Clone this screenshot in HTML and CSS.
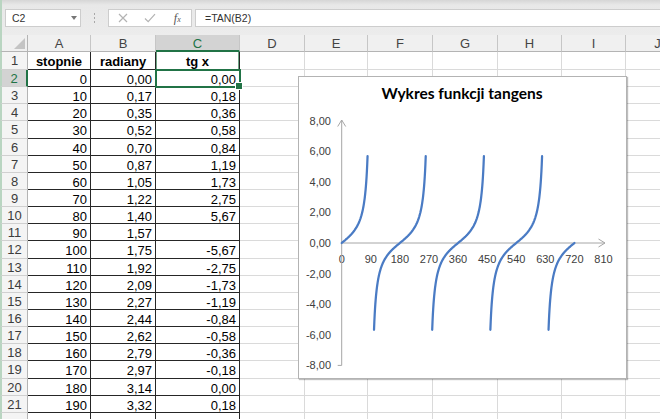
FILE: index.html
```html
<!DOCTYPE html>
<html lang="pl">
<head>
    <meta charset="UTF-8">
    <meta name="viewport" content="width=device-width, initial-scale=1.0">
    <title>Wykres funkcji tangens</title>
    <link rel="stylesheet" href="styles.css">
</head>
<body>
    <div class="window">
        <div class="formula-bar">
            <div class="name-box">
                <span>C2</span>
                <span class="drop"></span>
            </div>
            <div class="grip"><span></span><span></span><span></span></div>
            <div class="fx-box">
                <span class="btn">
                    <svg width="10" height="10" viewBox="0 0 10 10"><path d="M1 1L9 9M9 1L1 9" stroke="#b3b3b3" stroke-width="1.2" fill="none"/></svg>
                </span>
                <span class="btn">
                    <svg width="12" height="10" viewBox="0 0 12 10"><path d="M1 5.5L4.2 8.7L11 1.2" stroke="#b3b3b3" stroke-width="1.2" fill="none"/></svg>
                </span>
                <span class="btn fx"><i>f</i><small>x</small></span>
            </div>
            <div class="formula">=TAN(B2)</div>
        </div>

        <div class="sheet" id="sheet"></div>

        <div class="chart">
            <svg id="plot" width="327" height="301" viewBox="0 0 327 301">
                <text class="title" x="163" y="22" text-anchor="middle">Wykres funkcji tangens</text>
                <g id="labels"></g>
                <path class="axis" d="M42.7 43V288.4M38.7 288.4H42.7M38.7 49.5L42.7 43L46.7 49.5"/>
                <path class="axis" d="M42.7 166H306M299.5 162L306 166L299.5 170"/>
                <path id="curve" class="curve" d=""/>
            </svg>
        </div>
    </div>

    <script>
        const sheet = document.getElementById("sheet");
        const cols = ["A", "B", "C", "D", "E", "F", "G", "H", "I", "J"];

        function cell(cls, text) {
            const d = document.createElement("div");
            d.className = cls;
            if (text !== undefined) d.textContent = text;
            sheet.appendChild(d);
        }

        function fmt(v) {
            if (Math.abs(v) < 0.005) v = 0;
            return v.toFixed(2).replace(".", ",");
        }

        cell("corner");
        cols.forEach(c => cell(c === "C" ? "col-head active" : "col-head", c));

        for (let r = 1; r <= 22; r++) {
            // row 22 is only a sliver at the bottom edge, no label visible
            cell(r === 2 ? "row-head active" : "row-head", r <= 21 ? r : undefined);
            if (r === 1) {
                cell("c data head", "stopnie");
                cell("c data head", "radiany");
                cell("c data head c1", "tg x");
            } else if (r <= 21) {
                const deg = (r - 2) * 10;
                const rad = deg * Math.PI / 180;
                cell("c data num", deg);
                cell("c data num", fmt(rad));
                cell(r === 2 ? "c data num current" : "c data num", deg === 90 ? "" : fmt(Math.tan(rad)));
            } else {
                cell("c data");
                cell("c data");
                cell("c data");
            }
            for (let i = 3; i < cols.length; i++) cell("c");
        }

        // chart
        const svgNS = "http://www.w3.org/2000/svg";
        const x0 = 42.7, y0 = 166, kx = 0.3232, ky = 15.3;
        const labels = document.getElementById("labels");

        function label(x, y, text, anchor) {
            const t = document.createElementNS(svgNS, "text");
            t.setAttribute("x", x);
            t.setAttribute("y", y);
            t.setAttribute("text-anchor", anchor);
            t.textContent = text;
            labels.appendChild(t);
        }

        for (let v = 8; v >= -8; v -= 2) {
            label(32, y0 - v * ky + 4, fmt(v), "end");
        }
        for (let deg = 0; deg <= 810; deg += 90) {
            label(x0 + deg * kx, 186, deg, "middle");
        }

        const segments = [[0, 80], [100, 260], [280, 440], [460, 620], [640, 720]];
        let d = "";
        segments.forEach(([a, b]) => {
            for (let deg = a; deg <= b; deg++) {
                const x = x0 + deg * kx;
                const y = y0 - Math.tan(deg * Math.PI / 180) * ky;
                d += (deg === a ? "M" : "L") + x.toFixed(2) + " " + y.toFixed(2) + " ";
            }
        });
        document.getElementById("curve").setAttribute("d", d);
    </script>
</body>
</html>
```

FILE: styles.css
```css
* {
    box-sizing: border-box;
}

body {
    margin: 0;
    font-family: "Liberation Sans", Arial, sans-serif;
    background: #fff;
    overflow: hidden;
}

.window {
    position: relative;
    width: 660px;
    height: 419px;
    overflow: hidden;
}

/* formula bar */
.formula-bar {
    height: 35px;
    display: flex;
    align-items: flex-start;
    padding-top: 9px;
    background: linear-gradient(#d6d6d6, #e8e8e8 5px, #ececec);
    border-left: 2px solid #b9d5c1;
    font-size: 10.5px;
    color: #333;
}

.name-box {
    margin-left: 3px;
    width: 76px;
    height: 18px;
    display: flex;
    align-items: center;
    justify-content: space-between;
    padding: 0 3px 0 6px;
    background: #fff;
    border: 1px solid #cdcdcd;
}

.drop {
    width: 0;
    height: 0;
    border-left: 3.5px solid transparent;
    border-right: 3.5px solid transparent;
    border-top: 4px solid #777;
}

.grip {
    width: 27px;
    height: 18px;
    display: flex;
    flex-direction: column;
    align-items: center;
    justify-content: center;
    gap: 2px;
}

.grip span {
    width: 1px;
    height: 2px;
    background: #a8a8a8;
}

.fx-box {
    width: 84px;
    height: 18px;
    display: flex;
    background: #fff;
    border: 1px solid #cdcdcd;
}

.btn {
    width: 28px;
    height: 16px;
    display: flex;
    align-items: center;
    justify-content: center;
}

.fx {
    font-family: "Liberation Serif", serif;
    font-size: 12px;
    color: #555;
}

.fx small {
    font-size: 8px;
    font-style: italic;
    margin-top: 3px;
}

.formula {
    flex: 1;
    margin-left: 3px;
    height: 18px;
    line-height: 16px;
    padding-left: 9px;
    background: #fff;
    border: 1px solid #cdcdcd;
    border-right: none;
}

/* sheet */
.sheet {
    display: grid;
    grid-template-columns: 28px 63px 65px 84px 65px 63px 65px 65px 64px 64px 64px;
    grid-template-rows: 17px 18px repeat(21, 17.15px);
    font-size: 13px;
    color: #000;
}

.corner {
    position: relative;
    background: #f0f0f0;
    border-left: 2px solid #b9d5c1;
    border-right: 1px solid #b4b4b4;
    border-bottom: 1px solid #b4b4b4;
}

.corner::after {
    content: "";
    position: absolute;
    right: 2px;
    bottom: 2px;
    width: 0;
    height: 0;
    border-left: 11px solid transparent;
    border-bottom: 11px solid #c4c4c4;
}

.col-head {
    background: #f0f0f0;
    border-right: 1px solid #c6c6c6;
    border-bottom: 1px solid #b4b4b4;
    text-align: center;
    line-height: 14px;
    padding-top: 2px;
    color: #444;
}

.col-head.active {
    background: #d3d3d3;
    color: #217346;
    border-bottom: 2px solid #217346;
}

.row-head {
    background: #f4f4f4;
    border-left: 2px solid #b9d5c1;
    border-right: 1px solid #b4b4b4;
    border-bottom: 1px solid #d0d0d0;
    text-align: center;
    line-height: 14px;
    padding-top: 2px;
    color: #3c3c3c;
}

.row-head.active {
    background: #d3d3d3;
    color: #217346;
    border-right: 2px solid #217346;
}

.c {
    border-right: 1px solid #dadada;
    border-bottom: 1px solid #dadada;
    padding: 3px 3px 0;
    line-height: 14px;
    white-space: nowrap;
    overflow: hidden;
}

.data {
    border-color: #262626;
}

.num {
    text-align: right;
}

.head {
    text-align: center;
    font-weight: bold;
}

.c1 {
    box-shadow: inset 1px 0 #6fa585, inset -1px 0 #6fa585;
}

.current {
    position: relative;
    overflow: visible;
    outline: 2px solid #217346;
    outline-offset: -1px;
    z-index: 1;
}

.current::after {
    content: "";
    position: absolute;
    right: -4px;
    bottom: -4px;
    width: 6px;
    height: 6px;
    background: #217346;
    border: 1px solid #fff;
}

/* chart */
.chart {
    position: absolute;
    left: 298px;
    top: 76px;
    width: 329px;
    height: 303px;
    background: #fff;
    border: 1px solid #b3b3b3;
    box-shadow: 1px 1px 1px rgba(0, 0, 0, 0.25);
    z-index: 2;
}

.chart svg {
    display: block;
}

.title {
    font-family: Lato, "Open Sans", sans-serif;
    font-weight: bold;
    font-size: 15.5px;
    fill: #000;
}

#labels text {
    font-family: "Liberation Sans", Arial, sans-serif;
    font-size: 11px;
    fill: #404040;
}

.axis {
    fill: none;
    stroke: #a6a6a6;
    stroke-width: 1;
}

.curve {
    fill: none;
    stroke: #4a7bc4;
    stroke-width: 2.25;
    stroke-linejoin: round;
    stroke-linecap: round;
}
```
